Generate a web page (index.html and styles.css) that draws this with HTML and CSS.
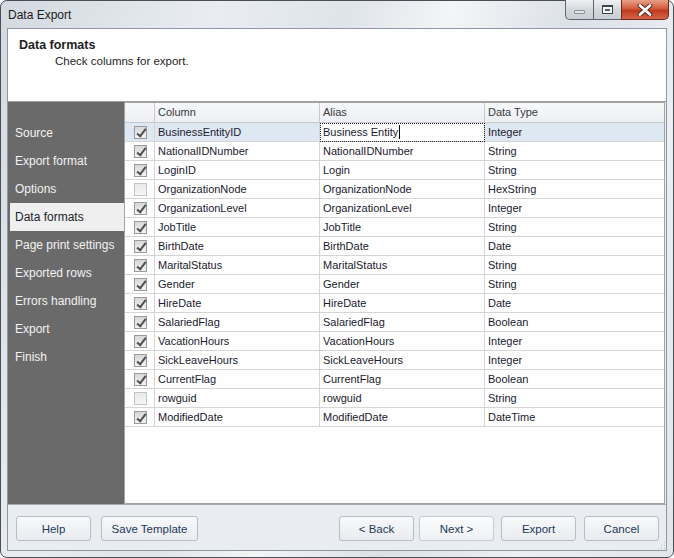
FILE: index.html
```html
<!DOCTYPE html>
<html lang="en">
  <head>
    <meta charset="UTF-8" />
    <title>Data Export</title>
    <link rel="stylesheet" href="styles.css">
  </head>
  <body>
    <div class="window">
      <div class="titleBar">
        <span class="title">Data Export</span>
        <div class="caption">
          <span class="capBtn minBtn"><i></i></span>
          <span class="capBtn maxBtn"><i></i></span>
          <span class="capBtn closeBtn">
            <svg width="16" height="12" viewBox="0 0 16 12">
              <path d="M3 1.5 L13 10.5 M13 1.5 L3 10.5" stroke="#5a2418" stroke-width="4.6" stroke-linecap="round" />
              <path d="M3 1.5 L13 10.5 M13 1.5 L3 10.5" stroke="#fff" stroke-width="2.8" stroke-linecap="round" />
            </svg>
          </span>
        </div>
      </div>
      <div class="client">
        <div class="pageHeader">
          <h1>Data formats</h1>
          <p>Check columns for export.</p>
        </div>
        <div class="main">
          <ul class="nav">
            <li>Source</li>
            <li>Export format</li>
            <li>Options</li>
            <li class="active">Data formats</li>
            <li>Page print settings</li>
            <li>Exported rows</li>
            <li>Errors handling</li>
            <li>Export</li>
            <li>Finish</li>
          </ul>
          <div class="grid">
            <div class="row head">
              <div class="cell chk"></div>
              <div class="cell">Column</div>
              <div class="cell">Alias</div>
              <div class="cell">Data Type</div>
            </div>
            <div class="row selected">
              <div class="cell chk"><span class="cb on"></span></div>
              <div class="cell">BusinessEntityID</div>
              <div class="cell editing">Business Entity<span class="caret"></span></div>
              <div class="cell">Integer</div>
            </div>
            <div class="row">
              <div class="cell chk"><span class="cb on"></span></div>
              <div class="cell">NationalIDNumber</div>
              <div class="cell">NationalIDNumber</div>
              <div class="cell">String</div>
            </div>
            <div class="row">
              <div class="cell chk"><span class="cb on"></span></div>
              <div class="cell">LoginID</div>
              <div class="cell">Login</div>
              <div class="cell">String</div>
            </div>
            <div class="row">
              <div class="cell chk"><span class="cb"></span></div>
              <div class="cell">OrganizationNode</div>
              <div class="cell">OrganizationNode</div>
              <div class="cell">HexString</div>
            </div>
            <div class="row">
              <div class="cell chk"><span class="cb on"></span></div>
              <div class="cell">OrganizationLevel</div>
              <div class="cell">OrganizationLevel</div>
              <div class="cell">Integer</div>
            </div>
            <div class="row">
              <div class="cell chk"><span class="cb on"></span></div>
              <div class="cell">JobTitle</div>
              <div class="cell">JobTitle</div>
              <div class="cell">String</div>
            </div>
            <div class="row">
              <div class="cell chk"><span class="cb on"></span></div>
              <div class="cell">BirthDate</div>
              <div class="cell">BirthDate</div>
              <div class="cell">Date</div>
            </div>
            <div class="row">
              <div class="cell chk"><span class="cb on"></span></div>
              <div class="cell">MaritalStatus</div>
              <div class="cell">MaritalStatus</div>
              <div class="cell">String</div>
            </div>
            <div class="row">
              <div class="cell chk"><span class="cb on"></span></div>
              <div class="cell">Gender</div>
              <div class="cell">Gender</div>
              <div class="cell">String</div>
            </div>
            <div class="row">
              <div class="cell chk"><span class="cb on"></span></div>
              <div class="cell">HireDate</div>
              <div class="cell">HireDate</div>
              <div class="cell">Date</div>
            </div>
            <div class="row">
              <div class="cell chk"><span class="cb on"></span></div>
              <div class="cell">SalariedFlag</div>
              <div class="cell">SalariedFlag</div>
              <div class="cell">Boolean</div>
            </div>
            <div class="row">
              <div class="cell chk"><span class="cb on"></span></div>
              <div class="cell">VacationHours</div>
              <div class="cell">VacationHours</div>
              <div class="cell">Integer</div>
            </div>
            <div class="row">
              <div class="cell chk"><span class="cb on"></span></div>
              <div class="cell">SickLeaveHours</div>
              <div class="cell">SickLeaveHours</div>
              <div class="cell">Integer</div>
            </div>
            <div class="row">
              <div class="cell chk"><span class="cb on"></span></div>
              <div class="cell">CurrentFlag</div>
              <div class="cell">CurrentFlag</div>
              <div class="cell">Boolean</div>
            </div>
            <div class="row">
              <div class="cell chk"><span class="cb"></span></div>
              <div class="cell">rowguid</div>
              <div class="cell">rowguid</div>
              <div class="cell">String</div>
            </div>
            <div class="row">
              <div class="cell chk"><span class="cb on"></span></div>
              <div class="cell">ModifiedDate</div>
              <div class="cell">ModifiedDate</div>
              <div class="cell">DateTime</div>
            </div>
          </div>
        </div>
        <div class="footer">
          <button class="btn">Help</button>
          <button class="btn save">Save Template</button>
          <button class="btn back">&lt; Back</button>
          <button class="btn next">Next &gt;</button>
          <button class="btn export">Export</button>
          <button class="btn cancel">Cancel</button>
          <span class="grip"></span>
        </div>
      </div>
    </div>
  </body>
</html>
```

FILE: styles.css
```css
* {
  padding: 0;
  margin: 0;
  box-sizing: border-box;
}
body {
  background: #fff;
  font-family: "Liberation Sans", Arial, sans-serif;
}
.window {
  width: 674px;
  height: 558px;
  border: 1px solid #4a4f55;
  border-radius: 7px;
  padding: 0 6px 6px 6px;
  display: flex;
  flex-direction: column;
  background: linear-gradient(
    110deg,
    #d3d9e0 0%,
    #e9edf1 25%,
    #dfe4e9 40%,
    #f3f5f7 52%,
    #dce1e7 66%,
    #eceff3 82%,
    #e2e6eb 100%
  );
}
.titleBar {
  height: 27px;
  display: flex;
  justify-content: space-between;
  align-items: flex-start;
}
.title {
  font-size: 12px;
  color: #1a1a1a;
  margin-top: 7px;
  margin-left: 1px;
}
.caption {
  display: flex;
  margin-top: -1px;
  margin-right: -2px;
}
.capBtn {
  height: 20px;
  display: flex;
  align-items: center;
  justify-content: center;
  border: 1px solid #5d6670;
  border-top: none;
}
.minBtn {
  width: 28px;
  border-right: none;
  border-radius: 0 0 0 5px;
  background: linear-gradient(#eef0f2, #d4d8dd 50%, #c9ced4);
}
.minBtn i {
  width: 11px;
  height: 4px;
  margin-top: 5px;
  border: 1px solid #8c939a;
  background: #e4e7ea;
  border-radius: 1px;
}
.maxBtn {
  width: 28px;
  border-right: none;
  background: linear-gradient(#eef0f2, #d4d8dd 50%, #c9ced4);
}
.maxBtn i {
  width: 11px;
  height: 9px;
  border: 1px solid #3e444a;
  border-top-width: 2px;
  background: #f4f5f6;
  box-shadow: inset 0 0 0 2px #f4f5f6, inset 0 0 0 3px #5a6068;
}
.closeBtn {
  width: 48px;
  border-radius: 0 0 5px 0;
  border-color: #6b2a1c;
  background: linear-gradient(#e9a08a, #d35a3c 45%, #c03a1e 55%, #d4654a);
}
.client {
  flex: 1;
  display: flex;
  flex-direction: column;
  border: 1px solid #8d98a4;
  background: #e9edf1;
}
.pageHeader {
  height: 73px;
  background: #fff;
  border-bottom: 1px solid #a0a0a0;
  padding: 8px 0 0 11px;
  color: #1e1e1e;
}
.pageHeader h1 {
  font-size: 12.5px;
  font-weight: bold;
  line-height: 16px;
}
.pageHeader p {
  font-size: 11.5px;
  line-height: 16px;
  padding-left: 36px;
}
.main {
  height: 402px;
  display: flex;
  padding-right: 1px;
}
.nav {
  width: 116px;
  background: #6a6a6a;
  list-style: none;
  padding-top: 17px;
}
.nav li {
  height: 28px;
  line-height: 28px;
  padding-left: 7px;
  font-size: 12px;
  color: #f2f2f2;
  white-space: nowrap;
}
.nav li.active {
  background: #efefef;
  color: #1e1e2e;
  margin-left: 2px;
  padding-left: 5px;
}
.grid {
  flex: 1;
  background: #fff;
  border: 1px solid #a3a3a3;
  font-size: 11px;
  color: #1a1a2e;
}
.row {
  display: grid;
  grid-template-columns: 30px 165px 165px 1fr;
  height: 19px;
}
.row.head {
  height: 20px;
  background: linear-gradient(#f7f8fa, #eceff3);
  color: #3a3a3a;
}
.row.selected {
  background: #dee8f3;
}
.cell {
  border-right: 1px solid #d5d5d5;
  border-bottom: 1px solid #d5d5d5;
  padding-left: 3px;
  line-height: 18px;
  white-space: nowrap;
  overflow: hidden;
}
.row.head .cell {
  border-color: #c6c9cd;
  line-height: 19px;
}
.cell:last-child {
  border-right: none;
}
.cell.chk {
  padding-left: 0;
  display: flex;
  align-items: center;
  justify-content: center;
}
.cell.editing {
  background: #fff;
  outline: 1px dotted #222;
  outline-offset: -1px;
}
.caret {
  display: inline-block;
  width: 1px;
  height: 14px;
  margin-left: 1px;
  background: #000;
  vertical-align: -3px;
}
.cb {
  width: 13px;
  height: 13px;
  margin-left: 1px;
  border: 1px solid #c4c4c4;
  background: linear-gradient(#e9e9e9, #f6f6f6);
  position: relative;
}
.cb.on {
  border-color: #9a9a9a;
  background: linear-gradient(#d8d8d8, #f2f2f2);
}
.cb.on::after {
  content: "";
  position: absolute;
  left: 4px;
  top: 0px;
  width: 3px;
  height: 8px;
  border: solid #505050;
  border-width: 0 2px 2px 0;
  transform: rotate(38deg);
}
.footer {
  flex: 1;
  display: flex;
  align-items: flex-start;
  border-top: 1px solid #a9adb2;
  padding: 11px 7px 0 8px;
  position: relative;
}
.btn {
  width: 75px;
  height: 25px;
  font-family: "Liberation Sans", Arial, sans-serif;
  font-size: 11.5px;
  color: #1e395b;
  border: 1px solid #b9bec5;
  border-radius: 3px;
  background: linear-gradient(#f7f8fa, #e9ecf0);
}
.btn.save {
  width: 97px;
  margin-left: 10px;
}
.btn.back {
  margin-left: auto;
}
.btn.next {
  margin-left: 5px;
  background: linear-gradient(#fbfcfd, #eff1f4);
  border-color: #c7cbd1;
}
.btn.export {
  margin-left: 7px;
}
.btn.cancel {
  margin-left: 8px;
}
.grip {
  position: absolute;
  right: 1px;
  bottom: 1px;
  width: 8px;
  height: 8px;
  background: radial-gradient(circle, #b4b9bf 0.8px, transparent 1px) 0 0 / 3px 3px;
  clip-path: polygon(100% 0, 100% 100%, 0 100%);
}
```
